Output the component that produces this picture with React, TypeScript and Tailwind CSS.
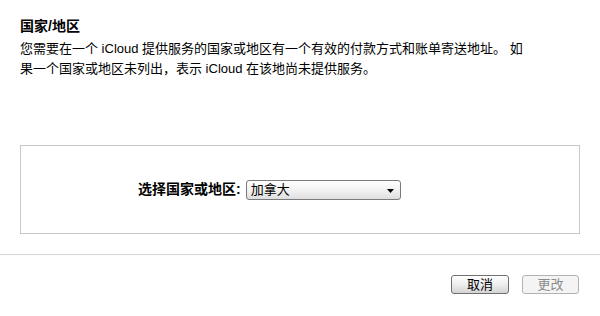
import React from "react"

const FONT = { fontFamily: '"Liberation Sans", "Noto Sans CJK SC", sans-serif' }

function CountrySelect() {
  return (
    <div className="flex h-[20px] w-[155px] items-center justify-between rounded-[3px] border border-[#7b7b7b] bg-gradient-to-b from-white via-[#f2f2f2] to-[#dedede] pl-[4px] pr-[6px] text-[13px] leading-none text-black">
      <span>加拿大</span>
      <svg width="7" height="4" viewBox="0 0 7 4" className="mt-[2px]">
        <path d="M0 0h7L3.5 4z" fill="#000" />
      </svg>
    </div>
  )
}

export default function App() {
  return (
    <div className="h-[316px] w-[600px] overflow-hidden bg-white text-black" style={FONT}>
      <div className="px-5 pt-[17px]">
        <h2 className="text-[14px] font-bold leading-[19px]">国家/地区</h2>
        <p className="mt-[3px] max-w-[512px] text-[13px] leading-[20px]">
          您需要在一个 iCloud 提供服务的国家或地区有一个有效的付款方式和账单寄送地址。 如果一个国家或地区未列出，表示 iCloud 在该地尚未提供服务。
        </p>
      </div>

      <div className="mx-5 mt-[66px] flex h-[89px] items-center border border-[#c8c8c8] pl-[117px]">
        <span className="mr-[5px] text-[14px] font-bold">选择国家或地区:</span>
        <CountrySelect />
      </div>

      <div className="mt-5 h-px bg-[#d6d6d6]" />

      <div className="mt-5 flex justify-end gap-[13px] pr-[21px]">
        <button className="h-[19px] w-[58px] rounded-[3px] border border-[#6f6f6f] bg-gradient-to-b from-white via-[#eeeeee] to-[#d4d4d4] text-[13px] leading-none text-black">
          取消
        </button>
        <button
          disabled
          className="h-[19px] w-[57px] rounded-[3px] border border-[#b0b4b6] bg-[#f4f4f4] text-[13px] leading-none text-[#8c8c8c]"
        >
          更改
        </button>
      </div>
    </div>
  )
}
